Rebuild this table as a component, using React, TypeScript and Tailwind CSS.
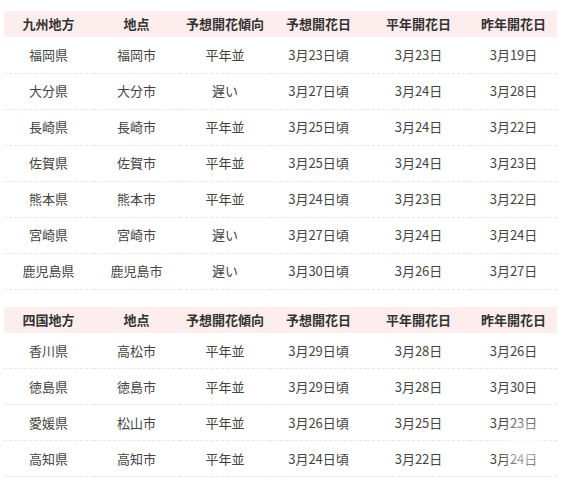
import React from 'react';

type Row = [string, string, string, string, string, string];

const KYUSHU: Row[] = [
  ['福岡県', '福岡市', '平年並', '3月23日頃', '3月23日', '3月19日'],
  ['大分県', '大分市', '遅い', '3月27日頃', '3月24日', '3月28日'],
  ['長崎県', '長崎市', '平年並', '3月25日頃', '3月24日', '3月22日'],
  ['佐賀県', '佐賀市', '平年並', '3月25日頃', '3月24日', '3月23日'],
  ['熊本県', '熊本市', '平年並', '3月24日頃', '3月23日', '3月22日'],
  ['宮崎県', '宮崎市', '遅い', '3月27日頃', '3月24日', '3月24日'],
  ['鹿児島県', '鹿児島市', '遅い', '3月30日頃', '3月26日', '3月27日'],
];

const SHIKOKU: Row[] = [
  ['香川県', '高松市', '平年並', '3月29日頃', '3月28日', '3月26日'],
  ['徳島県', '徳島市', '平年並', '3月29日頃', '3月28日', '3月30日'],
  ['愛媛県', '松山市', '平年並', '3月26日頃', '3月25日', '3月23日'],
  ['高知県', '高知市', '平年並', '3月24日頃', '3月22日', '3月24日'],
];

const WIDTHS = ['w-[89px]', 'w-[87px]', 'w-[90px]', 'w-[97px]', 'w-[103px]', 'w-[87px]'];

function BloomTable({ region, rows }: { region: string; rows: Row[] }) {
  const head = [region, '地点', '予想開花傾向', '予想開花日', '平年開花日', '昨年開花日'];
  return (
    <table className="w-[553px] table-fixed border-collapse text-[13px] text-[#444]">
      <thead>
        <tr className="h-[26px] bg-[#fdeded]">
          {head.map((h, i) => (
            <th key={i} className={`${WIDTHS[i]} p-0 text-center font-bold text-[#333]`}>
              {h}
            </th>
          ))}
        </tr>
      </thead>
      <tbody>
        {rows.map((r, ri) => (
          <tr key={ri} className="h-[36px] border-b border-dashed border-[#e6e6e6]">
            {r.map((c, ci) => (
              <td key={ci} className="p-0 text-center">
                {c}
              </td>
            ))}
          </tr>
        ))}
      </tbody>
    </table>
  );
}

export default function App() {
  return (
    <div
      className="relative h-[480px] w-[562px] overflow-hidden bg-white pl-[4px] pt-[11px]"
      style={{ fontFamily: '"Noto Sans CJK JP", "Noto Sans", sans-serif' }}
    >
      <div className="flex flex-col gap-[17px]">
        <BloomTable region="九州地方" rows={KYUSHU} />
        <BloomTable region="四国地方" rows={SHIKOKU} />
      </div>
      {/* faint white haze over the lower right corner */}
      <div className="pointer-events-none absolute left-[496px] top-[410px] h-[70px] w-[56px] rounded-full bg-[radial-gradient(closest-side,rgba(255,255,255,0.85),rgba(255,255,255,0))]" />
    </div>
  );
}
